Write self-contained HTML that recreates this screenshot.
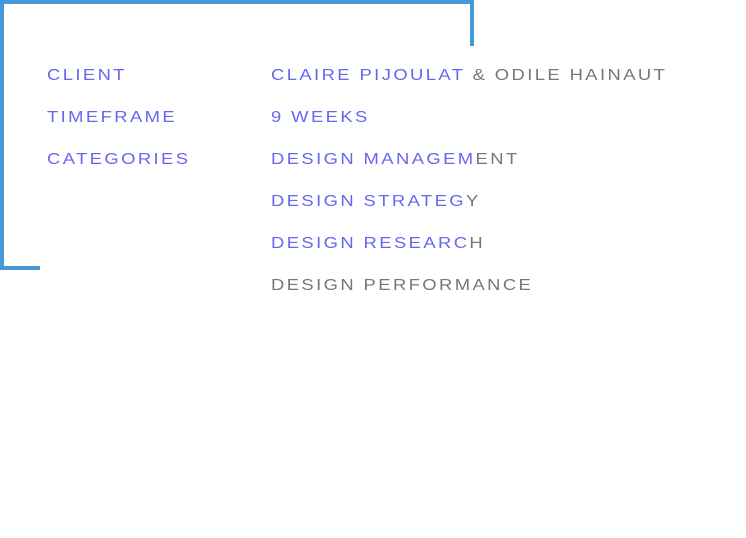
<!DOCTYPE html>
<html><head><meta charset="utf-8"><style>
body{margin:0;width:746px;height:538px;background:#fff;position:relative;overflow:hidden;font-family:"Liberation Sans",Arial,sans-serif;}
.b{position:absolute;background:#4597d6;}
.t{position:absolute;font-size:16px;letter-spacing:2.1px;line-height:16px;color:#6666f0;white-space:nowrap;transform:scaleX(1.15);transform-origin:0 0;}
.g{color:#777;}
</style></head><body>
<div class="b" style="left:0;top:0;width:474px;height:4px"></div>
<div class="b" style="left:0;top:0;width:4px;height:270px"></div>
<div class="b" style="left:470px;top:0;width:4px;height:46px"></div>
<div class="b" style="left:0;top:266px;width:40px;height:4px"></div>
<div class="t" style="left:47px;top:68px">CLIENT</div>
<div class="t" style="left:47px;top:110px">TIMEFRAME</div>
<div class="t" style="left:47px;top:152px">CATEGORIES</div>
<div class="t" style="left:271px;top:68px">CLAIRE PIJOULAT<span class="g"> &amp; ODILE HAINAUT</span></div>
<div class="t" style="left:271px;top:110px">9 WEEKS</div>
<div class="t" style="left:271px;top:152px">DESIGN MANAGEM<span class="g">ENT</span></div>
<div class="t" style="left:271px;top:194px">DESIGN STRATEG<span class="g">Y</span></div>
<div class="t" style="left:271px;top:236px">DESIGN RESEARC<span class="g">H</span></div>
<div class="t g" style="left:271px;top:278px">DESIGN PERFORMANCE</div>
</body></html>
